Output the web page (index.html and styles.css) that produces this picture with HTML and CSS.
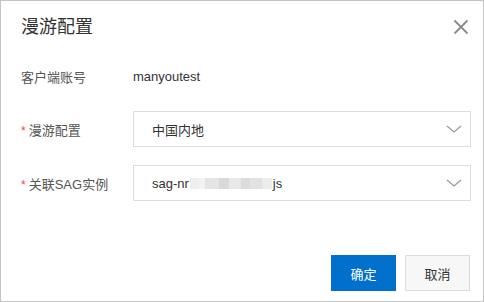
FILE: index.html
```html
<!DOCTYPE html>
<html lang="zh-CN">
<head>
    <meta charset="UTF-8">
    <meta name="viewport" content="width=device-width, initial-scale=1.0">
    <title>漫游配置</title>
    <link rel="stylesheet" href="styles.css">
</head>
<body>
    <!-- 弹窗 -->
    <div class="dialog">
        <div class="dialog-header">
            <h2 class="dialog-title">漫游配置</h2>
            <span class="close">
                <svg width="16" height="16" viewBox="0 0 16 16">
                    <path d="M1.5 1.5 L14.5 14.5 M14.5 1.5 L1.5 14.5" stroke="#8a8a8a" stroke-width="1.8" fill="none"/>
                </svg>
            </span>
        </div>

        <div class="dialog-body">
            <div class="form-item form-item-text">
                <label class="form-label">客户端账号</label>
                <div class="form-value">manyoutest</div>
            </div>

            <div class="form-item">
                <label class="form-label"><span class="required">*</span>漫游配置</label>
                <div class="select">
                    <span class="select-text">中国内地</span>
                    <svg class="arrow" width="16" height="8" viewBox="0 0 16 8">
                        <path d="M1 1 L8 7 L15 1" stroke="#999" stroke-width="1.2" fill="none"/>
                    </svg>
                </div>
            </div>

            <div class="form-item">
                <label class="form-label"><span class="required">*</span>关联SAG实例</label>
                <div class="select">
                    <span class="select-text">sag-nr<span class="mask">
                        <i class="m1"></i><i class="m2"></i><i class="m3"></i><i class="m4"></i><i class="m5"></i><i class="m6"></i><i class="m7"></i><i class="m8"></i>
                    </span>js</span>
                    <svg class="arrow" width="16" height="8" viewBox="0 0 16 8">
                        <path d="M1 1 L8 7 L15 1" stroke="#999" stroke-width="1.2" fill="none"/>
                    </svg>
                </div>
            </div>
        </div>

        <div class="dialog-footer">
            <button class="btn btn-primary">确定</button>
            <button class="btn">取消</button>
        </div>
    </div>
</body>
</html>
```

FILE: styles.css
```css
/* 基础 */
body {
    margin: 0;
    font-family: "Liberation Sans", "Noto Sans CJK SC", sans-serif;
    color: #333;
}

.dialog {
    box-sizing: border-box;
    width: 484px;
    height: 302px;
    border: 1px solid #c4c4c4;
    background-color: #fff;
    display: flex;
    flex-direction: column;
    padding: 0 12px 10px 20px;
}

.dialog-header {
    display: flex;
    justify-content: space-between;
    align-items: center;
    height: 52px;
    padding-top: 0;
}

.dialog-title {
    margin: 0;
    font-size: 18px;
    font-weight: normal;
    color: #333;
    line-height: 24px;
}

.close {
    display: flex;
    margin-right: 2px;
    cursor: pointer;
}

.dialog-body {
    padding-top: 6px;
}

.form-item {
    display: flex;
    align-items: center;
    height: 36px;
    margin-bottom: 18px;
}

.form-item-text {
    height: 34px;
}

.form-label {
    width: 112px;
    flex-shrink: 0;
    font-size: 13px;
    color: #555;
}

.required {
    color: #e84c3d;
    margin-right: 3px;
    font-size: 12px;
}

.form-value {
    font-size: 13px;
    color: #333;
}

.select {
    box-sizing: border-box;
    flex: 1;
    height: 36px;
    border: 1px solid #dcdcdc;
    display: flex;
    align-items: center;
    justify-content: space-between;
    padding: 0 8px 0 18px;
    font-size: 13px;
    color: #333;
}

.select-text {
    display: flex;
    align-items: center;
}

.mask {
    display: inline-flex;
    align-items: center;
    margin: 0 1px;
}

.mask i {
    display: inline-block;
    width: 11px;
    height: 11px;
    background-color: #e6e6e6;
}

.mask .m1 { width: 9px; background-color: #eeeeee; }
.mask .m2 { width: 6px; background-color: #f2f2f2; }
.mask .m3 { width: 14px; background-color: #e4e4e4; }
.mask .m4 { width: 10px; background-color: #d9d9d9; }
.mask .m5 { width: 12px; background-color: #e8e8e8; }
.mask .m6 { width: 9px; background-color: #dcdcdc; }
.mask .m7 { width: 12px; background-color: #e2e2e2; }
.mask .m8 { width: 10px; background-color: #ececec; }

.dialog-footer {
    margin-top: auto;
    display: flex;
    justify-content: flex-end;
    gap: 9px;
    padding-right: 1px;
}

.btn {
    width: 65px;
    height: 36px;
    border: 1px solid #dcdcdc;
    background-color: #f7f7f7;
    color: #333;
    font-family: inherit;
    font-size: 13px;
    cursor: pointer;
    padding: 0;
}

.btn-primary {
    background-color: #0070cc;
    border-color: #0070cc;
    color: #fff;
}
```
